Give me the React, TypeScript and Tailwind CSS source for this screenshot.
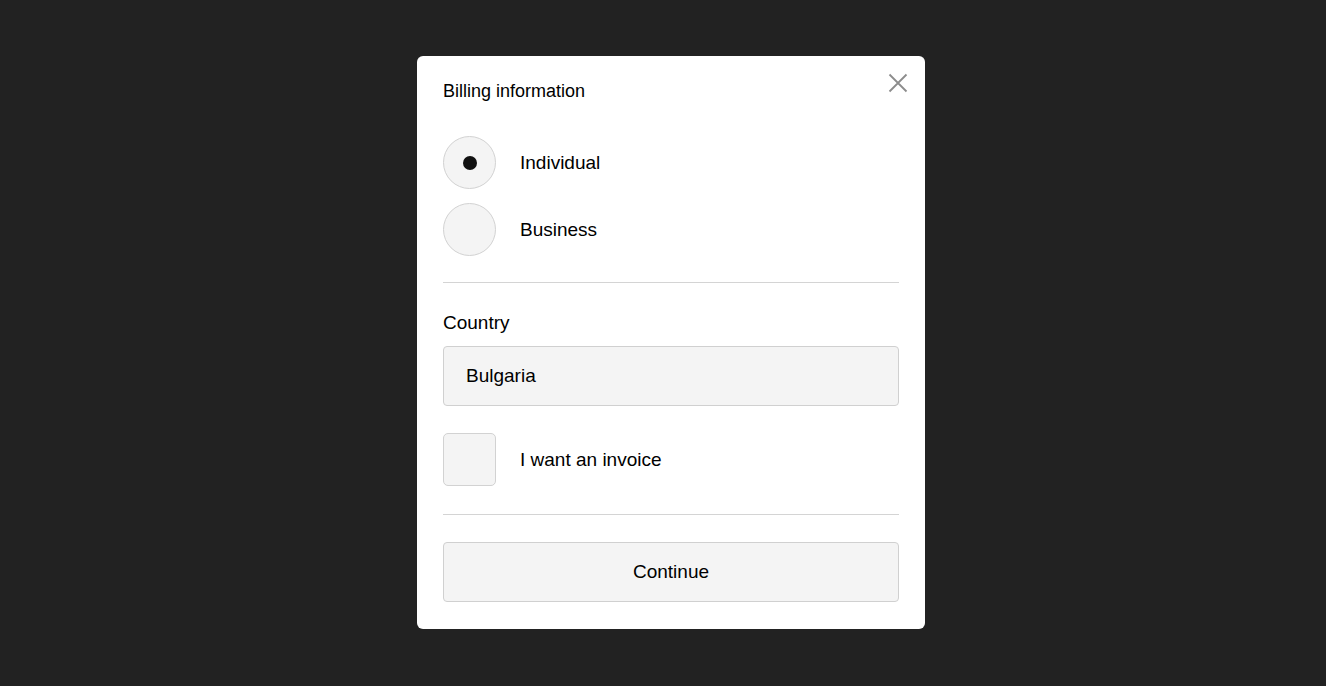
import React from "react";

export default function App() {
  return (
    <div
      className="w-full h-[686px] bg-[#222222] flex items-center justify-center pl-4 pb-px"
      style={{ fontFamily: '"Liberation Sans", Arial, sans-serif' }}
    >
      <div className="relative w-[508px] bg-white rounded-[6px] px-[26px] pt-[26px] pb-[27px] text-black">
        <button className="absolute top-[17px] right-[17px] w-[20px] h-[20px] flex items-center justify-center">
          <svg width="20" height="20" viewBox="0 0 20 20">
            <path d="M1.5 1.5 L18.5 18.5 M18.5 1.5 L1.5 18.5" stroke="#8c8c8c" strokeWidth="1.8" fill="none" />
          </svg>
        </button>
        <div className="text-[18px] leading-[18px]">Billing information</div>

        <div className="mt-[36px] flex flex-col gap-[14px]">
          <div className="flex items-center gap-[24px]">
            <div className="w-[53px] h-[53px] rounded-full bg-[#f4f4f4] border border-[#d2d2d2] flex items-center justify-center">
              <div className="w-[14px] h-[14px] rounded-full bg-[#111111]" />
            </div>
            <span className="text-[19px] leading-[22px]">Individual</span>
          </div>
          <div className="flex items-center gap-[24px]">
            <div className="w-[53px] h-[53px] rounded-full bg-[#f4f4f4] border border-[#d2d2d2]" />
            <span className="text-[19px] leading-[22px]">Business</span>
          </div>
        </div>

        <div className="mt-[26px] h-px bg-[#d4d4d4]" />

        <div className="mt-[29px] text-[19px] leading-[22px]">Country</div>
        <div className="mt-[12px] h-[60px] rounded-[4px] bg-[#f4f4f4] border border-[#d0d0d0] flex items-center px-[22px] text-[19px]">
          Bulgaria
        </div>

        <div className="mt-[27px] flex items-center gap-[24px]">
          <div className="w-[53px] h-[53px] rounded-[5px] bg-[#f4f4f4] border border-[#d2d2d2]" />
          <span className="text-[19px] leading-[22px]">I want an invoice</span>
        </div>

        <div className="mt-[28px] h-px bg-[#d4d4d4]" />

        <button className="mt-[27px] w-full h-[60px] rounded-[4px] bg-[#f4f4f4] border border-[#d0d0d0] flex items-center justify-center text-[19px] text-black">
          Continue
        </button>
      </div>
    </div>
  );
}
